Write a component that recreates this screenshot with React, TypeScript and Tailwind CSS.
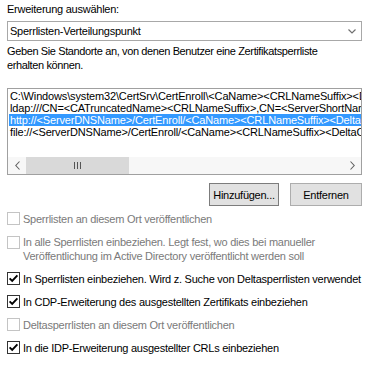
import React from "react";

function Check({ checked, disabled }: { checked?: boolean; disabled?: boolean }) {
  return (
    <div
      className={
        disabled
          ? "w-[13px] h-[13px] shrink-0 border border-[#c4c4c4] bg-white"
          : "w-[13px] h-[13px] shrink-0 border border-[#333333] bg-white flex items-center justify-center"
      }
    >
      {checked && (
        <svg width="11" height="11" viewBox="0 0 11 11">
          <path d="M1.6 5.4 L4.2 8 L9.4 2.4" fill="none" stroke="#000" strokeWidth="1.9" />
        </svg>
      )}
    </div>
  );
}

export default function App() {
  return (
    <div className="w-[369px] h-[387px] bg-white pt-[2px] px-[7px] font-['Liberation_Sans',Arial,sans-serif] text-[11px] tracking-[-0.25px] text-black overflow-hidden">
      <div className="h-[14px] leading-[14px]">Erweiterung auswählen:</div>

      <div className="mt-[5px] h-[20px] border border-[#a8a8a8] bg-white flex items-center pl-[2px] pr-[4px]">
        <span className="flex-1 leading-[14px]">Sperrlisten-Verteilungspunkt</span>
        <svg width="8" height="5" viewBox="0 0 8 5" className="mr-[1px]">
          <path d="M0.5 0.5 L4 4 L7.5 0.5" fill="none" stroke="#707070" strokeWidth="1.2" />
        </svg>
      </div>

      <div className="mt-[3px] leading-[14px] tracking-[-0.38px]">
        Geben Sie Standorte an, von denen Benutzer eine Zertifikatsperrliste
        <br />
        erhalten können.
      </div>

      <div className="mt-[16px] h-[87px] border border-[#a0a0a0] bg-white flex flex-col tracking-[-0.15px]">
        <div className="flex-1 pt-[1px] overflow-hidden whitespace-nowrap">
          <div className="h-[12px] leading-[12px] pl-[2px]">
            C:\Windows\system32\CertSrv\CertEnroll\&lt;CaName&gt;&lt;CRLNameSuffix&gt;&lt;DeltaCRLAllowed&gt;.crl
          </div>
          <div className="h-[12px] leading-[12px] pl-[2px]">
            ldap:///CN=&lt;CATruncatedName&gt;&lt;CRLNameSuffix&gt;,CN=&lt;ServerShortName&gt;,CN=CDP,CN=Public Key Services
          </div>
          <div className="h-[12px] leading-[12px] ml-[1px] pl-[1px] bg-[#3399ff] text-white">
            http://&lt;ServerDNSName&gt;/CertEnroll/&lt;CaName&gt;&lt;CRLNameSuffix&gt;&lt;DeltaCRLAllowed&gt;.crl
          </div>
          <div className="h-[12px] leading-[12px] pl-[2px]">
            file://&lt;ServerDNSName&gt;/CertEnroll/&lt;CaName&gt;&lt;CRLNameSuffix&gt;&lt;DeltaCRLAllowed&gt;.crl
          </div>
        </div>
        <div className="h-[17px] flex bg-[#f0f0f0]">
          <div className="w-[18px] h-full flex items-center justify-center bg-[#f7f7f7]">
            <svg width="5" height="9" viewBox="0 0 5 9">
              <path d="M4.5 0.5 L0.8 4.5 L4.5 8.5" fill="none" stroke="#606060" strokeWidth="1.1" />
            </svg>
          </div>
          <div className="w-[103px] h-full bg-[#d9d9d9] flex items-center justify-center">
            <div className="flex gap-[2px]">
              <div className="w-[1px] h-[7px] bg-[#555]" />
              <div className="w-[1px] h-[7px] bg-[#555]" />
              <div className="w-[1px] h-[7px] bg-[#555]" />
            </div>
          </div>
          <div className="flex-1 bg-[#f7f7f7]" />
          <div className="w-[17px] h-full flex items-center justify-center bg-[#f7f7f7]">
            <svg width="5" height="9" viewBox="0 0 5 9">
              <path d="M0.5 0.5 L4.2 4.5 L0.5 8.5" fill="none" stroke="#606060" strokeWidth="1.1" />
            </svg>
          </div>
        </div>
      </div>

      <div className="mt-[8px] flex justify-end gap-[11px]">
        <div className="w-[70px] h-[23px] border border-[#7c7c7c] bg-[#e1e1e1] flex items-center justify-center leading-[14px]">
          Hinzufügen...
        </div>
        <div className="w-[72px] h-[23px] border border-[#adadad] bg-[#e1e1e1] flex items-center justify-center leading-[14px]">
          Entfernen
        </div>
      </div>

      <div className="mt-[1px] flex flex-col leading-[14px]">
        <div className="h-[23px] flex items-center gap-[3px] text-[#7a7a7a]">
          <Check disabled />
          <span>Sperrlisten an diesem Ort veröffentlichen</span>
        </div>
        <div className="flex items-start gap-[3px] pt-[5px] pb-[4px] text-[#7a7a7a]">
          <div className="pt-[0.5px]">
            <Check disabled />
          </div>
          <span>
            In alle Sperrlisten einbeziehen. Legt fest, wo dies bei manueller
            <br />
            Veröffentlichung im Active Directory veröffentlicht werden soll
          </span>
        </div>
        <div className="h-[23px] flex items-center gap-[3px] whitespace-nowrap">
          <Check checked />
          <span>In Sperrlisten einbeziehen. Wird z. Suche von Deltasperrlisten verwendet</span>
        </div>
        <div className="h-[23px] flex items-center gap-[3px]">
          <Check checked />
          <span>In CDP-Erweiterung des ausgestellten Zertifikats einbeziehen</span>
        </div>
        <div className="h-[23px] flex items-center gap-[3px] text-[#7a7a7a]">
          <Check disabled />
          <span>Deltasperrlisten an diesem Ort veröffentlichen</span>
        </div>
        <div className="h-[23px] flex items-center gap-[3px]">
          <Check checked />
          <span>In die IDP-Erweiterung ausgestellter CRLs einbeziehen</span>
        </div>
      </div>
    </div>
  );
}
